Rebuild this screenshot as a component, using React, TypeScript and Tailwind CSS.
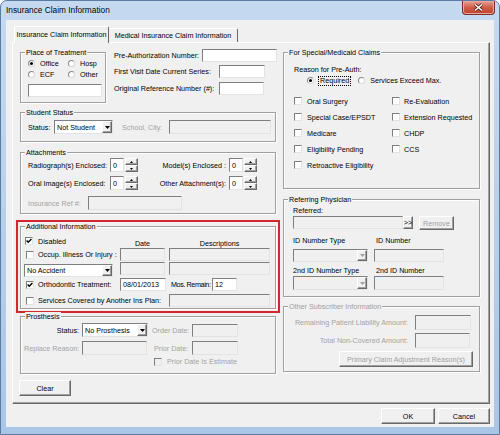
import React from "react";

// classic 3D edges
const sunken =
  "border border-t-[#7f7f7f] border-l-[#7f7f7f] border-r-[#e3e3e3] border-b-[#e3e3e3]";
const raised =
  "border border-t-[#ffffff] border-l-[#ffffff] border-r-[#696969] border-b-[#696969] shadow-[inset_-1px_-1px_0_#a0a0a0] bg-[#f0f0f0]";

function Field({
  className = "",
  value,
  disabled,
}: {
  className?: string;
  value?: string;
  disabled?: boolean;
}) {
  return (
    <div
      className={`${sunken} ${
        disabled ? "bg-[#f0f0f0]" : "bg-white"
      } flex items-center pl-[2px] whitespace-nowrap overflow-hidden shrink-0 ${className}`}
    >
      {value}
    </div>
  );
}

function Tri({ gray }: { gray?: boolean }) {
  return (
    <svg width="5" height="3" viewBox="0 0 5 3">
      <polygon points="0,0 5,0 2.5,3" fill={gray ? "#a0a0a0" : "#000"} />
    </svg>
  );
}

function Combo({
  className = "",
  value,
  disabled,
}: {
  className?: string;
  value?: string;
  disabled?: boolean;
}) {
  return (
    <div
      className={`${sunken} ${
        disabled ? "bg-[#f0f0f0]" : "bg-white"
      } flex items-stretch shrink-0 ${className}`}
    >
      <span className="flex-1 pl-[2px] flex items-center whitespace-nowrap overflow-hidden">
        {value}
      </span>
      <span className={`${raised} w-[10px] flex items-center justify-center`}>
        <Tri gray={disabled} />
      </span>
    </div>
  );
}

function Spin({ className = "" }: { className?: string }) {
  return (
    <div className={`flex flex-col w-[13px] h-[14px] shrink-0 ${className}`}>
      <div className={`${raised} h-[7px] flex items-center justify-center`}>
        <svg width="3" height="2" viewBox="0 0 3 2">
          <polygon points="1.5,0 3,2 0,2" fill="#000" />
        </svg>
      </div>
      <div className={`${raised} h-[7px] flex items-center justify-center`}>
        <svg width="3" height="2" viewBox="0 0 3 2">
          <polygon points="0,0 3,0 1.5,2" fill="#000" />
        </svg>
      </div>
    </div>
  );
}

function Check({ checked, disabled }: { checked?: boolean; disabled?: boolean }) {
  return (
    <span
      className={`w-[8px] h-[8px] ${sunken} ${
        disabled ? "bg-[#f0f0f0]" : "bg-white"
      } flex items-center justify-center shrink-0`}
    >
      {checked && (
        <svg width="6" height="6" viewBox="0 0 6 6">
          <path d="M0.6 2.6 L2.2 4.3 L5.4 0.9" stroke="#000" strokeWidth="1.4" fill="none" />
        </svg>
      )}
    </span>
  );
}

function Radio({ checked }: { checked?: boolean }) {
  return (
    <span className="w-[7px] h-[7px] rounded-full border border-[#8a8a8a] border-r-[#d8d8d8] border-b-[#d8d8d8] bg-white flex items-center justify-center shrink-0">
      {checked && <span className="w-[3px] h-[3px] rounded-full bg-black" />}
    </span>
  );
}

function Group({
  label,
  className = "",
  disabled,
  children,
}: {
  label: string;
  className?: string;
  disabled?: boolean;
  children?: React.ReactNode;
}) {
  return (
    <div
      className={`border border-[#a0a0a0] shadow-[inset_1px_1px_0_#ffffff,1px_1px_0_#ffffff] shrink-0 ${className}`}
    >
      <div
        className={`-mt-[5px] ml-[4px] px-[1px] w-fit bg-[#f0f0f0] whitespace-nowrap ${
          disabled ? "text-[#a0a0a0]" : ""
        }`}
      >
        {label}
      </div>
      {children}
    </div>
  );
}

function Button({
  className = "",
  label,
  disabled,
}: {
  className?: string;
  label: string;
  disabled?: boolean;
}) {
  return (
    <div
      className={`${raised} flex items-center justify-center whitespace-nowrap shrink-0 ${
        disabled ? "text-[#a0a0a0]" : ""
      } ${className}`}
    >
      {label}
    </div>
  );
}

export default function App() {
  return (
    <div className="w-[500px] h-[435px] overflow-hidden rounded-t-[7px] border border-[#5b7ba3] bg-gradient-to-b from-[#c5daf1] to-[#a9c6e7] font-['Liberation_Sans',Arial,sans-serif] text-[7.2px] leading-[9px] text-black flex flex-col">
      {/* title bar */}
      <div className="h-[19px] flex items-start shrink-0">
        <div className="ml-[5px] mt-[4px] text-[8.3px] leading-[10px] whitespace-nowrap">
          Insurance Claim Information
        </div>
        <div className="ml-auto mr-[4px] w-[33px] h-[14px] rounded-b-[4px] border border-t-0 border-[#7a3028] bg-gradient-to-b from-[#e6a296] via-[#d05c4a] to-[#c0412e] shadow-[inset_0_0_0_1px_#e8a89c] flex items-center justify-center">
          <svg width="11" height="9" viewBox="0 0 11 9">
            <path d="M2 1.5 L9 7.5 M9 1.5 L2 7.5" stroke="#5a1a12" strokeWidth="3" />
            <path d="M2 1.5 L9 7.5 M9 1.5 L2 7.5" stroke="#ffffff" strokeWidth="1.6" />
          </svg>
        </div>
      </div>

      {/* client area */}
      <div className="ml-[5px] w-[488px] h-[407px] bg-[#f0f0f0] flex flex-col shrink-0">
        {/* tabs */}
        <div className="flex items-end ml-[8px] mt-[6px] h-[16px] relative z-10 shrink-0">
          <div className="w-[95px] h-[17px] -mb-[1px] bg-[#f0f0f0] border-t border-l border-[#ffffff] border-r border-r-[#696969] rounded-t-[2px] flex items-center justify-center pb-[1px] whitespace-nowrap">
            Insurance Claim Information
          </div>
          <div className="w-[129px] h-[14px] bg-[#f0f0f0] border-t border-t-[#ffffff] border-r border-r-[#696969] rounded-tr-[2px] flex items-center justify-center whitespace-nowrap">
            Medical Insurance Claim Information
          </div>
        </div>

        {/* tab panel */}
        <div className="ml-[6px] w-[478px] h-[362px] border-t border-l border-t-[#ffffff] border-l-[#ffffff] border-r border-b border-r-[#696969] border-b-[#696969] shadow-[inset_-1px_-1px_0_#a0a0a0] flex pl-[7px] pt-[6px] shrink-0">
          {/* LEFT COLUMN */}
          <div className="w-[256px] flex flex-col shrink-0">
            <div className="flex h-[54px] shrink-0">
              <Group label="Place of Treatment" className="mt-[3px] w-[86px] h-[51px]">
                <div className="grid grid-cols-[40px_auto] ml-[6.5px] mt-[1.5px] gap-y-[2px]">
                  <div className="flex items-center h-[9px]">
                    <Radio checked />
                    <span className="ml-[5.5px]">Office</span>
                  </div>
                  <div className="flex items-center h-[9px]">
                    <Radio />
                    <span className="ml-[5.5px]">Hosp</span>
                  </div>
                  <div className="flex items-center h-[9px]">
                    <Radio />
                    <span className="ml-[5.5px]">ECF</span>
                  </div>
                  <div className="flex items-center h-[9px]">
                    <Radio />
                    <span className="ml-[5.5px]">Other</span>
                  </div>
                </div>
                <Field className="ml-[7px] mt-[5.5px] w-[74px] h-[13px]" />
              </Group>

              <div className="ml-[8px] flex flex-col w-[163px]">
                <div className="flex items-center h-[13px]">
                  <span className="w-[88px] whitespace-nowrap">Pre-Authorization Number:</span>
                  <Field className="w-[75px] h-[13px]" />
                </div>
                <div className="flex items-center h-[13px] mt-[3px]">
                  <span className="w-[105px] whitespace-nowrap">First Visit Date Current Series:</span>
                  <Field className="w-[46px] h-[13px]" />
                </div>
                <div className="flex items-center h-[13px] mt-[4px]">
                  <span className="w-[105px] whitespace-nowrap">Original Reference Number (#):</span>
                  <Field className="w-[45px] h-[13px]" />
                </div>
              </div>
            </div>

            <Group label="Student Status" className="mt-[9px] w-[256px] h-[30px]">
              <div className="flex items-center mt-[3px] ml-[7px] h-[14px]">
                <span className="w-[26px]">Status:</span>
                <Combo className="w-[59px] h-[14px]" value="Not Student" />
                <span className="ml-[9px] w-[47px] text-[#a3a3a3] whitespace-nowrap">School, City:</span>
                <Field disabled className="w-[102px] h-[14px]" />
              </div>
            </Group>

            <Group label="Attachments" className="mt-[10px] w-[256px] h-[62px]">
              <div className="flex items-center mt-[1px] ml-[7px] h-[14px]">
                <span className="w-[82px] whitespace-nowrap">Radiograph(s) Enclosed:</span>
                <Field className="w-[14px] h-[14px]" value="0" />
                <Spin className="ml-[1px]" />
                <span className="w-[91px] text-right pr-[3px] whitespace-nowrap">Model(s) Enclosed :</span>
                <Field className="w-[14px] h-[14px]" value="0" />
                <Spin className="ml-[1px]" />
              </div>
              <div className="flex items-center mt-[4px] ml-[7px] h-[14px]">
                <span className="w-[82px] whitespace-nowrap">Oral Image(s) Enclosed:</span>
                <Field className="w-[14px] h-[14px]" value="0" />
                <Spin className="ml-[1px]" />
                <span className="w-[91px] text-right pr-[3px] whitespace-nowrap">Other Attachment(s):</span>
                <Field className="w-[14px] h-[14px]" value="0" />
                <Spin className="ml-[1px]" />
              </div>
              <div className="flex items-center mt-[6px] ml-[7px] h-[14px]">
                <span className="w-[60px] text-[#a3a3a3] whitespace-nowrap">Insurance Ref #:</span>
                <Field disabled className="w-[94px] h-[14px]" />
              </div>
            </Group>

            {/* highlighted section */}
            <div className="mt-[6px] -mx-[4px] border-2 border-[#d4262e] px-[2px] pt-[4px] pb-[2px] shrink-0">
              <Group label="Additional Information" className="w-[256px] h-[83px]">
                <div className="flex mt-[5px] h-[12px]">
                  <div className="w-[99px] flex items-center h-[10px] pl-[4px]">
                    <Check checked />
                    <span className="ml-[5px]">Disabled</span>
                  </div>
                  <span className="w-[45px] text-center self-end">Date</span>
                  <span className="ml-[4px] w-[101px] text-center self-end">Descriptions</span>
                </div>
                <div className="flex items-center h-[13px]">
                  <div className="w-[99px] flex items-center pl-[5px]">
                    <Check />
                    <span className="ml-[4px] whitespace-nowrap">Occup. Illness Or Injury :</span>
                  </div>
                  <Field disabled className="w-[45px] h-[13px]" />
                  <Field disabled className="ml-[4px] w-[101px] h-[13px]" />
                </div>
                <div className="flex items-start mt-[1px] h-[15px]">
                  <Combo className="ml-[3px] mt-[2px] w-[89px] h-[13px]" value="No Accident" />
                  <Field disabled className="ml-[7px] w-[45px] h-[13px]" />
                  <Field disabled className="ml-[4px] w-[101px] h-[13px]" />
                </div>
                <div className="flex items-center mt-[1px] h-[13px]">
                  <div className="w-[99px] flex items-center pl-[5px]">
                    <Check checked />
                    <span className="ml-[4px] whitespace-nowrap">Orthodontic Treatment:</span>
                  </div>
                  <Field className="w-[46px] h-[13px]" value="08/01/2013" />
                  <span className="ml-[5px] w-[41px] tracking-[-0.4px] whitespace-nowrap">Mos. Remain:</span>
                  <Field className="w-[25px] h-[13px]" value="12" />
                </div>
                <div className="flex items-center mt-[3px] h-[13px]">
                  <div className="w-[148px] flex items-center pl-[5px]">
                    <Check />
                    <span className="ml-[4px] whitespace-nowrap">Services Covered by Another Ins Plan:</span>
                  </div>
                  <Field disabled className="w-[101px] h-[13px]" />
                </div>
              </Group>
            </div>

            <Group label="Prosthesis" className="mt-[3px] w-[256px] h-[58px]">
              <div className="flex items-center mt-[2px] h-[14px]">
                <span className="w-[61px] text-right pr-[3px]">Status:</span>
                <Combo className="w-[66px] h-[14px]" value="No Prosthesis" />
                <span className="ml-[4px] w-[40px] text-[#a3a3a3] whitespace-nowrap">Order Date:</span>
                <Field disabled className="w-[46px] h-[13px]" />
              </div>
              <div className="flex items-center mt-[4px] h-[14px]">
                <span className="ml-[3px] w-[58px] text-[#a3a3a3] whitespace-nowrap">Replace Reason:</span>
                <Field disabled className="w-[65px] h-[14px]" />
                <span className="ml-[7px] w-[38px] text-[#a3a3a3] whitespace-nowrap">Prior Date:</span>
                <Field disabled className="w-[46px] h-[14px]" />
              </div>
              <div className="flex items-center mt-[2px] h-[9px] pl-[133px]">
                <Check disabled />
                <span className="ml-[5px] text-[#a3a3a3] whitespace-nowrap">Prior Date Is Estimate</span>
              </div>
            </Group>

            <Button label="Clear" className="mt-[6px] -ml-[1px] w-[52px] h-[16px]" />
          </div>

          {/* RIGHT COLUMN */}
          <div className="ml-[7px] w-[197px] flex flex-col shrink-0">
            <Group label="For Special/Medicaid Claims" className="mt-[3px] w-[197px] h-[137px]">
              <div className="mt-[7.5px] ml-[10px] whitespace-nowrap">Reason for Pre-Auth:</div>
              <div className="flex items-center mt-[2px] h-[10px] ml-[22.5px]">
                <Radio checked />
                <span className="ml-[4.5px] border border-dotted border-black px-[1px] leading-[8px]">
                  Required
                </span>
                <span className="ml-[6.5px]">
                  <Radio />
                </span>
                <span className="ml-[5.5px] whitespace-nowrap">Services Exceed Max.</span>
              </div>
              <div className="grid grid-cols-[98px_auto] ml-[10px] mt-[11px] gap-y-[7px]">
                {[
                  ["Oral Surgery", "Re-Evaluation"],
                  ["Special Case/EPSDT", "Extension Requested"],
                  ["Medicare", "CHDP"],
                  ["Eligibility Pending", "CCS"],
                  ["Retroactive Eligibility", ""],
                ].map(([a, b]) => (
                  <React.Fragment key={a}>
                    <div className="flex items-center h-[9px]">
                      <Check />
                      <span className="ml-[5px] whitespace-nowrap">{a}</span>
                    </div>
                    <div className="flex items-center h-[9px]">
                      {b && (
                        <>
                          <Check />
                          <span className="ml-[4px] whitespace-nowrap">{b}</span>
                        </>
                      )}
                    </div>
                  </React.Fragment>
                ))}
              </div>
            </Group>

            <Group label="Referring Physician" className="mt-[10px] w-[197px] h-[98px]">
              <div className="mt-[2px] ml-[9px]">Referred:</div>
              <div className="flex items-start mt-[1px] ml-[9px] h-[14px]">
                <Field disabled className="w-[110px] h-[13px]" />
                <Button label=">>" className="w-[10px] h-[13px]" />
                <Button label="Remove" disabled className="ml-[6px] w-[35px] h-[14px]" />
              </div>
              <div className="flex mt-[5.5px] ml-[9px] h-[9px]">
                <span className="w-[83px] whitespace-nowrap">ID Number Type</span>
                <span className="whitespace-nowrap">ID Number</span>
              </div>
              <div className="flex items-center mt-[4.5px] ml-[9px] h-[13px]">
                <Combo disabled className="w-[75px] h-[13px]" />
                <Field disabled className="ml-[6px] w-[70px] h-[13px]" />
              </div>
              <div className="flex mt-[3.5px] ml-[9px] h-[9px]">
                <span className="w-[83px] whitespace-nowrap">2nd ID Number Type</span>
                <span className="whitespace-nowrap">2nd ID Number</span>
              </div>
              <div className="flex items-center mt-[1.5px] ml-[9px] h-[14px]">
                <Combo disabled className="w-[75px] h-[14px]" />
                <Field disabled className="ml-[6px] w-[70px] h-[14px]" />
              </div>
            </Group>

            <Group label="Other Subscriber Information" disabled className="mt-[9px] w-[197px] h-[66px]">
              <div className="flex items-center mt-[4px] h-[15px]">
                <span className="w-[131px] text-right pr-[7px] text-[#a3a3a3] whitespace-nowrap">
                  Remaining Patient Liability Amount:
                </span>
                <Field disabled className="w-[56px] h-[15px]" />
              </div>
              <div className="flex items-center mt-[3px] h-[15px]">
                <span className="w-[131px] text-right pr-[7px] text-[#a3a3a3] whitespace-nowrap">
                  Total Non-Covered Amount:
                </span>
                <Field disabled className="w-[55px] h-[15px]" />
              </div>
              <Button
                label="Primary Claim Adjustment Reason(s)"
                disabled
                className="mt-[3px] ml-[55px] w-[134px] h-[16px]"
              />
            </Group>
          </div>
        </div>

        {/* dialog buttons */}
        <div className="flex justify-end gap-[3px] mt-[4px] pr-[4px] shrink-0">
          <Button label="OK" className="w-[54px] h-[16px]" />
          <Button label="Cancel" className="w-[52px] h-[16px]" />
        </div>
      </div>
    </div>
  );
}
